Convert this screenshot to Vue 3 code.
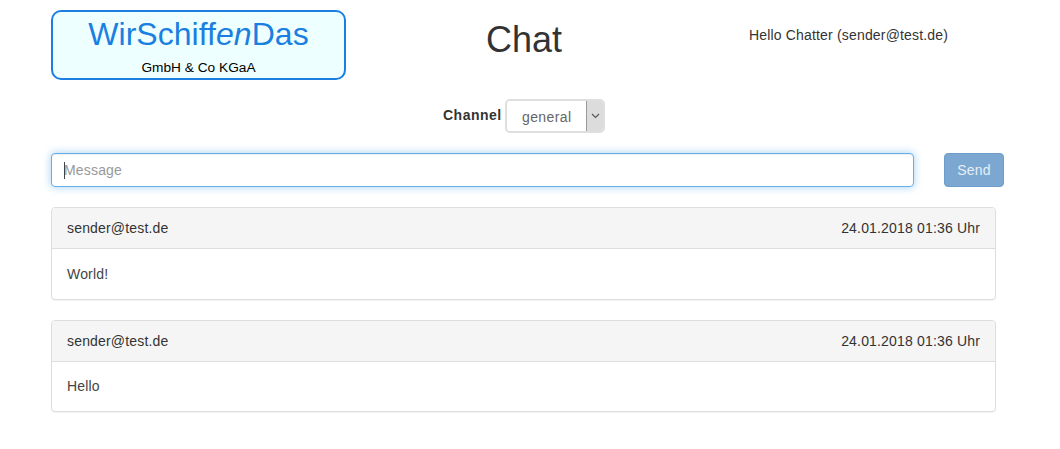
<script setup>
const messages = [
  { sender: 'sender@test.de', time: '24.01.2018 01:36 Uhr', text: 'World!' },
  { sender: 'sender@test.de', time: '24.01.2018 01:36 Uhr', text: 'Hello' }
]
</script>

<template>
  <div class="page">
    <header class="top">
      <div class="logo">
        <div class="brand">WirSchiff<i>en</i>Das</div>
        <div class="legal">GmbH &amp; Co KGaA</div>
      </div>
      <h1 class="title">Chat</h1>
      <div class="hello">Hello Chatter (sender@test.de)</div>
    </header>

    <div class="channel">
      <label class="channel-label">Channel</label>
      <div class="select">
        <span class="select-value">general</span>
        <span class="select-arrow">
          <svg width="9" height="6" viewBox="0 0 9 6"><path d="M1 1l3.5 3.5L8 1" fill="none" stroke="#555" stroke-width="1.1"/></svg>
        </span>
      </div>
    </div>

    <div class="send-row">
      <div class="input-wrap">
        <input class="input" type="text" placeholder="Message" />
        <span class="caret"></span>
      </div>
      <button class="send" type="button">Send</button>
    </div>

    <section v-for="(m, i) in messages" :key="i" class="panel">
      <div class="panel-head">
        <span>{{ m.sender }}</span>
        <span>{{ m.time }}</span>
      </div>
      <div class="panel-body">{{ m.text }}</div>
    </section>
  </div>
</template>

<style>
html, body { margin: 0; background: #fff; }
</style>

<style scoped>
.page {
  box-sizing: border-box;
  width: 1060px;
  height: 449px;
  padding: 10px 0 0 51px;
  font-family: "Liberation Sans", Arial, sans-serif;
  font-size: 14px;
  letter-spacing: 0.17px;
  line-height: 20px;
  color: #333;
  overflow: hidden;
}
.top {
  display: flex;
  align-items: flex-start;
  height: 70px;
}
.logo {
  box-sizing: border-box;
  width: 295px;
  height: 70px;
  border: 2px solid #1a7fe0;
  border-radius: 10px;
  background: #eeffff;
  text-align: center;
  letter-spacing: 0;
}
.brand {
  font-size: 32px;
  line-height: 36px;
  margin-top: 4px;
  color: #1a7fe0;
  letter-spacing: 0.03px;
}
.legal {
  font-size: 13.7px;
  line-height: 16px;
  margin-top: 8px;
  color: #000;
}
.title {
  width: 356px;
  margin: 10px 0 0;
  font-size: 36px;
  line-height: 40px;
  font-weight: 400;
  text-align: center;
  letter-spacing: 0;
  color: #333;
}
.hello {
  margin: 15px 0 0 47px;
  white-space: nowrap;
}
.channel {
  display: flex;
  align-items: center;
  height: 34px;
  margin-top: 19px;
  padding-left: 392px;
}
.channel-label {
  width: 62px;
  font-weight: 700;
  letter-spacing: 0.5px;
  white-space: nowrap;
  position: relative;
  top: -1px;
}
.select {
  box-sizing: border-box;
  display: flex;
  width: 100px;
  height: 34px;
  border: 2px solid #dfdfdf;
  border-radius: 5px;
  background: #fff;
  overflow: hidden;
}
.select-value {
  flex: 1;
  padding-left: 15px;
  line-height: 32px;
  letter-spacing: 0.4px;
  color: #666;
}
.select-arrow {
  box-sizing: border-box;
  width: 17px;
  display: flex;
  align-items: center;
  justify-content: center;
  background: #dcdcdc;
  border-left: 1px solid #999;
}
.send-row {
  display: flex;
  margin-top: 20px;
}
.input-wrap {
  position: relative;
  width: 863px;
  height: 34px;
}
.input {
  box-sizing: border-box;
  display: block;
  width: 100%;
  height: 34px;
  padding: 6px 12px;
  border: 1px solid #66afe9;
  border-radius: 4px;
  outline: 0;
  background: #fff;
  font: inherit;
  letter-spacing: inherit;
  color: #555;
  box-shadow: inset 0 1px 1px rgba(0,0,0,.075), 0 0 8px rgba(102,175,233,.6);
}
.input::placeholder { color: #999; opacity: 1; }
.caret {
  position: absolute;
  left: 13px;
  top: 9px;
  width: 1px;
  height: 17px;
  background: #444;
}
.send {
  box-sizing: border-box;
  width: 60px;
  height: 34px;
  margin-left: 30px;
  border: 1px solid #6d9ecb;
  border-radius: 4px;
  background: #7ba7d0;
  color: #e6eff7;
  font: inherit;
  letter-spacing: inherit;
  padding: 0;
}
.panel {
  box-sizing: border-box;
  width: 945px;
  margin-top: 20px;
  border: 1px solid #ddd;
  border-radius: 4px;
  background: #fff;
  box-shadow: 0 1px 1px rgba(0,0,0,.05);
}
.panel-head {
  display: flex;
  justify-content: space-between;
  height: 41px;
  box-sizing: border-box;
  padding: 10px 15px;
  background: #f5f5f5;
  border-bottom: 1px solid #ddd;
  border-radius: 3px 3px 0 0;
}
.panel-body {
  padding: 15px;
  color: #444;
}
.panel:last-child .panel-body {
  padding-top: 14px;
}
</style>
